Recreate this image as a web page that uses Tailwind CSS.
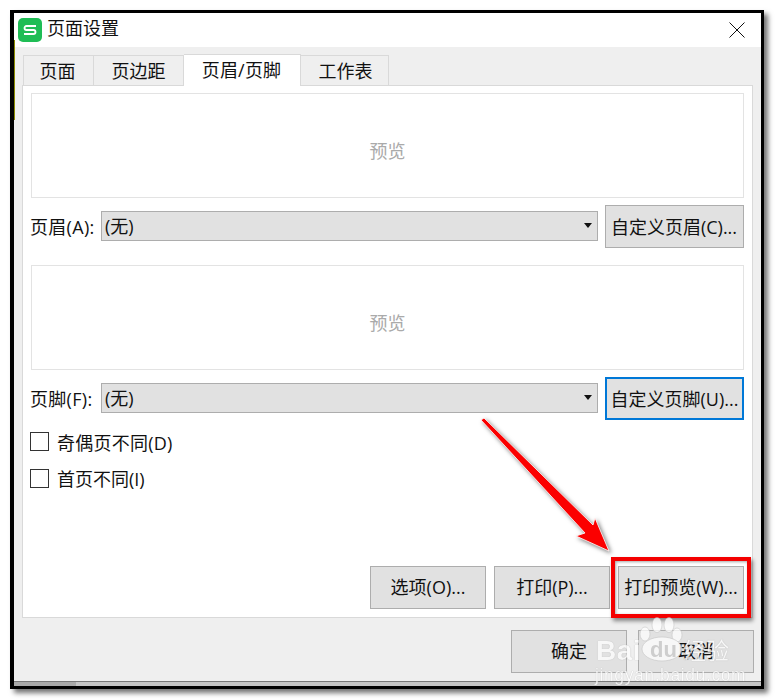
<!DOCTYPE html>
<html lang="zh">
<head>
<meta charset="utf-8">
<script src="https://cdn.jsdelivr.net/npm/@tailwindcss/browser@4"></script>
</head>
<body class="bg-white">
<div class="relative w-[775px] h-[700px] overflow-hidden bg-white pt-[10px] pl-[10px] font-['Open_Sans','Noto_Sans_CJK_SC',sans-serif] text-[18px] text-[#111]">
  <div class="flex flex-col w-[754px] h-[679px] border-[3px] border-l-4 border-black shadow-[4px_4px_5px_rgba(0,0,0,0.55)] bg-[#efefef]">
    <!-- title -->
    <div class="flex items-center h-[34px] bg-white pl-[4px] pr-[16px] shrink-0">
      <svg class="w-[24px] h-[24px]" viewBox="0 0 24 24"><rect width="24" height="24" rx="5" fill="#1fbd55"/><path d="M18 8H8.5a2 2 0 0 0 0 4h7a2 2 0 0 1 0 4H6" fill="none" stroke="#fff" stroke-width="1.8"/></svg>
      <span class="ml-[5px] leading-none pb-[4px]">页面设置</span>
      <svg class="ml-auto w-[16px] h-[16px]" viewBox="0 0 16 16"><path d="M0.5 0.5L15.5 15.5M15.5 0.5L0.5 15.5" stroke="#111" stroke-width="1"/></svg>
    </div>
    <!-- tabs -->
    <div class="flex items-end h-[38px] pl-[9px] shrink-0">
      <div class="flex items-center justify-center w-[71px] h-[30px] pt-[2px] pr-[2px] bg-[#efefef] border border-b-0 border-[#d9d9d9]">页面</div>
      <div class="flex items-center justify-center w-[90px] h-[30px] pt-[2px] bg-[#efefef] border border-l-0 border-b-0 border-[#d9d9d9]">页边距</div>
      <div class="relative top-px flex items-center justify-center w-[117px] h-[32px] pb-[1px] pr-px bg-white border border-l-0 border-b-0 border-[#d9d9d9] tracking-[0.2px]">页眉/页脚</div>
      <div class="flex items-center justify-center w-[88px] h-[30px] pt-[2px] pl-[2px] bg-[#efefef] border border-l-0 border-b-0 border-[#d9d9d9]">工作表</div>
    </div>
    <!-- panel -->
    <div class="flex flex-col mx-[8px] h-[533px] bg-white border border-[#d9d9d9] px-[8px] pt-[7px] pb-[8px] shrink-0">
      <div class="flex items-center justify-center h-[105px] pt-[12px] border border-[#e3e3e3] text-[#aaa] shrink-0">预览</div>
      <div class="flex items-center h-[43px] mt-[7px] shrink-0">
        <span class="w-[70px] -ml-px pt-[2px] mt-[-1px] whitespace-nowrap mr-px tracking-[0.3px]">页眉(A):</span>
        <div class="flex items-center w-[497px] h-[30px] -mt-[2px] bg-[#e1e1e1] border border-[#adadad] pl-[3px] pr-[5px]">
          <span class="pt-[2px]">(无)</span>
          <svg class="ml-auto w-[8px] h-[5px]" viewBox="0 0 8 5"><path d="M0 0H8L4 5Z" fill="#111"/></svg>
        </div>
        <div class="flex items-center justify-center w-[139px] h-[43px] pt-[2px] pr-px ml-[7px] bg-[#e1e1e1] border border-[#adadad] whitespace-nowrap">自定义页眉(C)...</div>
      </div>
      <div class="flex items-center justify-center h-[105px] mt-[17px] pt-[12px] border border-[#e3e3e3] text-[#aaa] shrink-0">预览</div>
      <div class="flex items-center h-[43px] mt-[7px] shrink-0">
        <span class="w-[70px] -ml-px pt-[2px] mt-[-1px] whitespace-nowrap mr-px tracking-[0.3px]">页脚(F):</span>
        <div class="flex items-center w-[497px] h-[30px] -mt-[2px] bg-[#e1e1e1] border border-[#adadad] pl-[3px] pr-[5px]">
          <span class="pt-[2px]">(无)</span>
          <svg class="ml-auto w-[8px] h-[5px]" viewBox="0 0 8 5"><path d="M0 0H8L4 5Z" fill="#111"/></svg>
        </div>
        <div class="flex items-center justify-center w-[139px] h-[43px] pt-[2px] ml-[7px] bg-[#e1e1e1] border-2 border-[#0078d7] whitespace-nowrap">自定义页脚(U)...</div>
      </div>
      <div class="flex items-center h-[19px] mt-[12px] shrink-0">
        <span class="w-[19px] h-[19px] -ml-px border border-[#333] bg-white"></span>
        <span class="ml-[8px] pt-[3px] whitespace-nowrap tracking-[0.25px]">奇偶页不同(D)</span>
      </div>
      <div class="flex items-center h-[19px] mt-[18px] shrink-0">
        <span class="w-[19px] h-[19px] -ml-px border border-[#333] bg-white"></span>
        <span class="ml-[8px] pt-[2px] whitespace-nowrap">首页不同(I)</span>
      </div>
      <div class="flex justify-end gap-[8px] mt-auto">
        <div class="flex items-center justify-center w-[116px] h-[43px] bg-[#e1e1e1] border border-[#adadad] whitespace-nowrap">选项(O)...</div>
        <div class="flex items-center justify-center w-[116px] h-[43px] bg-[#e1e1e1] border border-[#adadad] whitespace-nowrap">打印(P)...</div>
        <div class="flex items-center justify-center w-[126px] h-[43px] bg-[#e1e1e1] border border-[#adadad] whitespace-nowrap">打印预览(W)...</div>
      </div>
    </div>
    <!-- footer -->
    <div class="flex justify-end gap-[11px] h-[63px] pt-[12px] pr-[7px] shrink-0">
      <div class="flex items-center justify-center w-[116px] h-[43px] bg-[#e1e1e1] border border-[#adadad]">确定</div>
      <div class="flex items-center justify-center w-[116px] h-[43px] bg-[#e1e1e1] border border-[#adadad]">取消</div>
    </div>
    <!-- sliver of the sheet behind -->
    <div class="flex h-[5px] border-t border-[#777] shrink-0">
      <div class="w-[62px] bg-[#a8a8a8]"></div>
      <div class="flex-1 bg-[#c4c4c4]"></div>
    </div>
  </div>

  <!-- sliver of yellow at the window's left edge -->
  <div class="absolute left-[14px] top-[40px] w-px h-[80px] bg-[#8a8a00]"></div>

  <!-- red highlight -->
  <div class="absolute left-[611px] top-[557px] w-[140px] h-[61px] border-[4px] border-[#f40000] shadow-[2px_3px_4px_rgba(0,0,0,0.45),inset_1px_1px_3px_rgba(0,0,0,0.35)]"></div>

  <!-- arrow -->
  <svg class="absolute left-0 top-0 w-[775px] h-[700px] pointer-events-none drop-shadow-[2px_2px_2px_rgba(0,0,0,0.5)]" viewBox="0 0 775 700">
    <path d="M595 518L609 551L576 536L585 533L481 420L484 418L593 525Z" fill="#fb0000" stroke="#fff" stroke-width="1" stroke-opacity="0.8"/>
  </svg>

  <!-- watermark -->
  <div class="absolute left-[585px] top-[610px] w-[160px] h-[80px] opacity-75 text-white [text-shadow:0_0_1px_#999] font-['Liberation_Sans',sans-serif]">
    <svg class="absolute left-0 top-0 w-[160px] h-[60px]" viewBox="0 0 160 60" fill="#fff" stroke="#bbb" stroke-width="0.6">
      <ellipse cx="60" cy="24" rx="5" ry="7"/><ellipse cx="72" cy="15" rx="5" ry="7.5"/><ellipse cx="84" cy="15" rx="5" ry="7.5"/><ellipse cx="92" cy="25" rx="5" ry="7"/>
      <ellipse cx="77" cy="39" rx="20" ry="12"/>
    </svg>
    <span class="absolute left-[11px] top-[25px] text-[28px] font-bold leading-[32px] tracking-[0.5px]">Bai</span>
    <span class="absolute left-[65px] top-[27px] text-[22px] font-bold leading-[26px] text-[#c8c8c8] [text-shadow:none]">du</span>
    <span class="absolute left-[98px] top-[24px] text-[23px] leading-[30px] font-['Noto_Sans_CJK_SC',sans-serif]">经验</span>
    <span class="absolute left-[10px] top-[56px] text-[17.5px] leading-[18px] tracking-[0.6px] whitespace-nowrap">jingyan.baidu.com</span>
  </div>
</div>
</body>
</html>
